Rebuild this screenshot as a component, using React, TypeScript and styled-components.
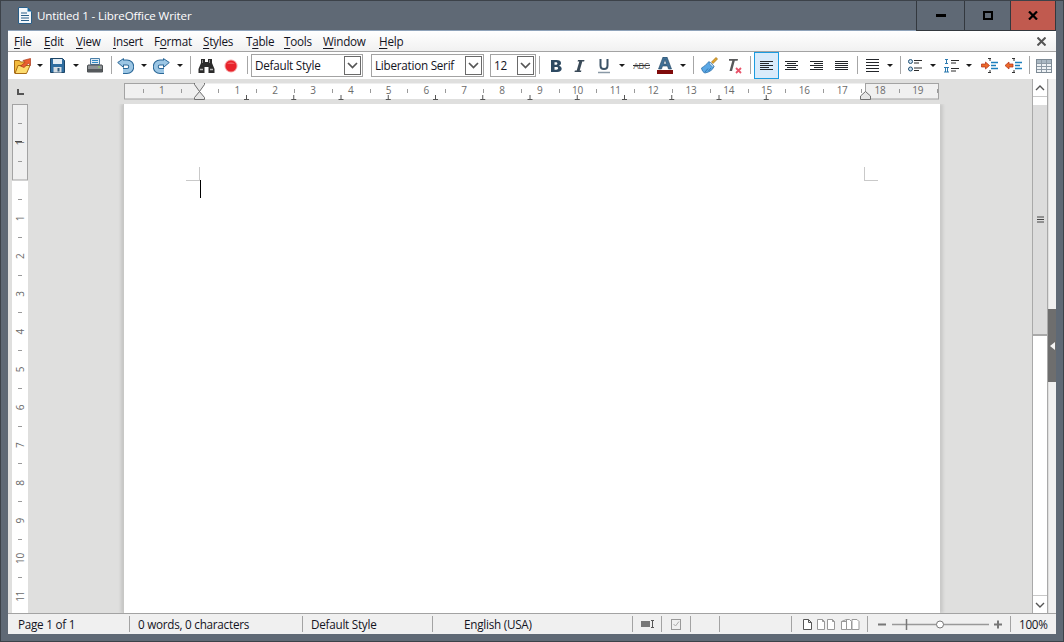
import React from "react";
import styled, { createGlobalStyle } from "styled-components";

const UI_FONT = `"Open Sans", "Noto Sans", "Liberation Sans", sans-serif`;

const GlobalStyle = createGlobalStyle`
    html, body { margin: 0; padding: 0; background: #5f6975; }
    * { box-sizing: border-box; }
`;

const Frame = styled.div`
    width: 1064px;
    height: 642px;
    display: flex;
    flex-direction: column;
    background: #5f6975;
    border: 1px solid #3c4249;
    overflow: hidden;
    font-family: ${UI_FONT};
    font-size: 12px;
    letter-spacing: -0.25px;
    color: #14141e;
`;

const TitleBar = styled.div`
    height: 29px;
    flex: none;
    display: flex;
    align-items: center;
    padding-left: 17px;
    color: #fff;
`;

const TitleText = styled.div`
    margin-left: 5px;
    font-size: 11.6px;
    letter-spacing: -0.13px;
    flex: 1;
`;

const WindowButtons = styled.div`
    position: relative;
    z-index: 1;
    display: flex;
    height: 29px;
    margin-right: 7px;
    align-self: flex-start;
`;

const WindowButton = styled.div<{ $w: number; $close?: boolean }>`
    width: ${(p) => p.$w}px;
    height: 30px;
    display: flex;
    align-items: center;
    justify-content: center;
    border-left: 1px solid #33383e;
    border-bottom: 1px solid #33383e;
    background: ${(p) => (p.$close ? "#c15a4f" : "#5f6975")};
    ${(p) => p.$close && "border-right: 1px solid #33383e;"}
`;

const Client = styled.div`
    flex: 1;
    min-height: 0;
    margin: 0 7px;
    display: flex;
    flex-direction: column;
    border-top: 1px solid #8fa3ba;
`;

const MenuBar = styled.div`
    height: 21px;
    flex: none;
    display: flex;
    align-items: center;
    padding-left: 6px;
    background: linear-gradient(#ffffff, #f1f1f1);
    border-bottom: 1px solid #a3a3a3;
`;

const MenuItem = styled.div<{ $w: number }>`
    width: ${(p) => p.$w}px;
    flex: none;
    white-space: nowrap;
    font-size: 11.7px;
    u { text-underline-offset: 2px; }
`;

const MenuSpacer = styled.div`
    flex: 1;
`;

const DocClose = styled.div`
    width: 24px;
    display: flex;
    justify-content: center;
    margin-right: 3px;
`;

const ToolBar = styled.div`
    height: 27px;
    flex: none;
    display: flex;
    align-items: stretch;
    background: #fff;
    padding-left: 2px;
    overflow: hidden;
`;

const Tool = styled.div<{ $w: number; $active?: boolean }>`
    width: ${(p) => p.$w}px;
    flex: none;
    display: flex;
    align-items: center;
    justify-content: center;
    ${(p) => p.$active && "background: #d9ebfb; border: 1px solid #1c9ce0;"}
    svg { flex: none; }
`;

const Sep = styled.div<{ $l: number; $r?: number }>`
    width: 1px;
    flex: none;
    margin: 4px ${(p) => p.$r ?? 0}px 5px ${(p) => p.$l}px;
    background: #a6a6a6;
`;

const Combo = styled.div<{ $w: number; $l?: number }>`
    width: ${(p) => p.$w}px;
    height: 23px;
    margin: 2px 0 0 ${(p) => p.$l ?? 0}px;
    flex: none;
    display: flex;
    align-items: center;
    justify-content: space-between;
    border: 1px solid #a3a3a3;
    padding: 0 1px 0 3px;
`;

const ComboLabel = styled.span`
    font-size: 11.7px;
    white-space: nowrap;
    padding-bottom: 2px;
`;

const ComboButton = styled.div`
    width: 17px;
    height: 19px;
    border: 1px solid #6a6a6a;
    display: flex;
    align-items: center;
    justify-content: center;
`;

const Workspace = styled.div`
    flex: 1;
    min-height: 0;
    display: flex;
    background: #dfdfde;
`;

const DocColumn = styled.div`
    flex: 1;
    min-width: 0;
    display: flex;
    flex-direction: column;
`;

const RulerRow = styled.div`
    height: 25px;
    flex: none;
    display: flex;
    padding-top: 4px;
`;

const RulerCorner = styled.div`
    width: 116px;
    flex: none;
    padding: 6px 0 0 9px;
    svg { display: block; }
`;

const RulerDrawing = styled.svg`
    display: block;
    font-family: ${UI_FONT};
    font-size: 10px;
`;

const DocRow = styled.div`
    flex: 1;
    min-height: 0;
    display: flex;
    padding-left: 4px;
    overflow: hidden;
`;

const Page = styled.div`
    position: relative;
    width: 816px;
    margin-left: 96px;
    background: #fff;
    box-shadow: -1px 0 0 #c8c8c6, -3px 0 3px rgba(0, 0, 0, 0.12), 3px 0 3px rgba(0, 0, 0, 0.1);
`;

const CropMark = styled.div<{ $left: number; $flip?: boolean }>`
    position: absolute;
    top: 63px;
    left: ${(p) => p.$left}px;
    width: 14px;
    height: 14px;
    border-bottom: 1px solid #c9c9c9;
    ${(p) => (p.$flip ? "border-left: 1px solid #c9c9c9;" : "border-right: 1px solid #c9c9c9;")}
`;

const Caret = styled.div`
    position: absolute;
    left: 76px;
    top: 76px;
    width: 1px;
    height: 18px;
    background: #000;
`;

const ScrollBar = styled.div`
    width: 16px;
    flex: none;
    margin-left: 1px;
    display: flex;
    flex-direction: column;
    background: #fff;
    border-left: 1px solid #a9a9a9;
    border-right: 1px solid #a9a9a9;
`;

const ScrollEnd = styled.div`
    height: 17px;
    flex: none;
    display: flex;
    align-items: center;
    justify-content: center;
    background: #fff;
`;

const ScrollTrack = styled.div`
    flex: 1;
    padding-top: 8px;
    border-top: 1px solid #c8c8c8;
    border-bottom: 1px solid #c8c8c8;
`;

const ScrollThumb = styled.div`
    height: 231px;
    background: #dcdcdc;
    border-bottom: 2px solid #a9a9a9;
    display: flex;
    align-items: center;
    justify-content: center;
`;

const SideStrip = styled.div`
    width: 8px;
    flex: none;
    padding-top: 230px;
    background: linear-gradient(90deg, #dfdfde 1px, #f0f0f0 1px);
`;

const SideHandle = styled.div`
    height: 73px;
    background: #6e6e6e;
    display: flex;
    align-items: center;
    justify-content: center;
`;

const StatusBar = styled.div`
    height: 21px;
    flex: none;
    display: flex;
    align-items: center;
    background: #f0f0f0;
    border-top: 1px solid #a3a3a3;
    font-size: 11.7px;
`;

const StatusCell = styled.div<{ $w: number; $pad?: number; $center?: boolean }>`
    width: ${(p) => p.$w}px;
    height: 16px;
    flex: none;
    display: flex;
    align-items: center;
    ${(p) => p.$center && "justify-content: center;"}
    padding-left: ${(p) => p.$pad ?? 0}px;
    border-right: 1px solid #a3a3a3;
    white-space: nowrap;
`;

const ZoomValue = styled.div`
    padding-left: 8px;
    white-space: nowrap;
`;

const BottomEdge = styled.div`
    height: 7px;
    flex: none;
`;

const MENU = [
    { before: "", hot: "F", after: "ile", w: 30 },
    { before: "", hot: "E", after: "dit", w: 32 },
    { before: "", hot: "V", after: "iew", w: 37 },
    { before: "", hot: "I", after: "nsert", w: 41 },
    { before: "F", hot: "o", after: "rmat", w: 49 },
    { before: "", hot: "S", after: "tyles", w: 43 },
    { before: "T", hot: "a", after: "ble", w: 38 },
    { before: "", hot: "T", after: "ools", w: 39 },
    { before: "", hot: "W", after: "indow", w: 56 },
    { before: "", hot: "H", after: "elp", w: 40 },
];

const Arrow = () => (
    <svg width="6" height="3" viewBox="0 0 6 3"><path d="M0 0h6L3 3z" fill="#1b1b1b" /></svg>
);

const Chevron = () => (
    <svg width="11" height="7" viewBox="0 0 11 7"><path d="M1 1l4.500 4.500L10 1" fill="none" stroke="#555" strokeWidth="1.700" /></svg>
);

const DocIcon = () => (
    <svg width="14" height="17" viewBox="0 0 14 17">
        <path d="M.5.5h9l4 4v12H.5z" fill="#f4f7fa" stroke="#2a5f88" />
        <path d="M9.500.5l4 4h-4z" fill="#1c6ea4" />
        <path d="M3 6h6M3 8.500h8M3 11h8M3 13.500h8" stroke="#2a5f88" />
    </svg>
);

const OpenIcon = () => (
    <svg width="17" height="16" viewBox="0 0 17 16">
        <path d="M.5 2.500h5l1 1.500h5v11H.5z" fill="#f3bb3e" stroke="#a86c16" />
        <path d="M1 15.500L4 7.500h12l-3.500 8z" fill="#fddc6e" stroke="#a86c16" />
        <path d="M6.500 8l4.500-3.500-2-2L16.500.5v7l-2.200-2L10 9.500z" fill="#ea5f30" stroke="#a8381a" strokeWidth=".7" />
    </svg>
);

const SaveIcon = () => (
    <svg width="15" height="15" viewBox="0 0 15 15">
        <path d="M.5.5h12l2 2v12H.5z" fill="#2f6da0" stroke="#1d4566" />
        <rect x="3" y="1" width="9" height="5" fill="#e4edf4" />
        <rect x="3.500" y="9" width="8" height="5.500" fill="#d5dde3" />
        <rect x="7.500" y="10" width="2" height="3.500" fill="#2f5a7d" />
    </svg>
);

const PrintIcon = () => (
    <svg width="16" height="15" viewBox="0 0 16 15">
        <path d="M3.500.5h9v6h-9z" fill="#dfeaf3" stroke="#4a7fa8" />
        <path d="M5 2.500h6M5 4.500h6" stroke="#2f8ac6" />
        <path d="M1 7h14l.5 1v6H.5V8z" fill="#8f9396" stroke="#4b4f52" />
        <rect x="1" y="11" width="14" height="3" fill="#55595c" />
        <rect x="11" y="8.500" width="2" height="1" fill="#8fdc5a" />
    </svg>
);

const TURN = "M5 4.500H10a4.200 4.200 0 0 1 0 8.500H6";

const UndoIcon = ({ flip }: { flip?: boolean }) => (
    <svg width="17" height="16" viewBox="0 0 17 16" style={flip ? { transform: "scaleX(-1)" } : undefined}>
        <path d={TURN} fill="none" stroke="#2a6797" strokeWidth="6" />
        <path d="M.7 4.500L6.500.6v8.800z" fill="#9cc6e4" stroke="#2a6797" />
        <path d={TURN} fill="none" stroke="#9cc6e4" strokeWidth="4" />
    </svg>
);

const BinocularIcon = () => (
    <svg width="17" height="16" viewBox="0 0 17 16">
        <path d="M3 1h4v3h3V1h4v4l2.500 6v4H10.500V9h-4v6H.5v-4L3 5z" fill="#2c2c2c" />
        <path d="M2 11.500h3M12 11.500h3" stroke="#b7b7b7" strokeWidth="1.500" />
        <path d="M4.500 2v3M11.500 2v3" stroke="#8a8a8a" />
    </svg>
);

const RecordIcon = () => (
    <svg width="14" height="14" viewBox="0 0 14 14">
        <circle cx="7" cy="7" r="6.500" fill="#f4a0a0" />
        <circle cx="7" cy="7" r="5.500" fill="#e8232b" />
        <path d="M3 5a4.500 3 0 0 1 8 0z" fill="#f25a5e" />
    </svg>
);

const LetterIcon = ({ kind }: { kind: "B" | "I" }) =>
    kind === "B" ? (
        <svg width="12" height="14" viewBox="0 0 12 14">
            <path
                d="M1 1h5.500C9.500 1 11 2.200 11 4c0 1.300-.8 2.300-2 2.700 1.500.3 2.700 1.500 2.700 3.100 0 2-1.700 3.200-4.500 3.200H1z M4.500 3.300v2.500h1.300c1 0 1.600-.5 1.600-1.300s-.6-1.200-1.600-1.200z M4.500 8v2.700h1.800c1.200 0 1.800-.5 1.800-1.400S7.500 8 6.300 8z"
                fill="#2e4a62"
                fillRule="evenodd"
            />
        </svg>
    ) : (
        <svg width="11" height="14" viewBox="0 0 11 14">
            <path d="M4 1h6.500l-.4 1.500H8.300L5.700 11.500h1.700L7 13H.5l.4-1.500h1.800L5.300 2.500H3.600z" fill="#3a4a58" />
        </svg>
    );

const UnderlineIcon = () => (
    <svg width="12" height="16" viewBox="0 0 12 16">
        <path d="M2.500 1v6.500c0 2.200 1.400 3.500 3.500 3.500s3.500-1.300 3.500-3.500V1" fill="none" stroke="#3c5366" strokeWidth="2" />
        <path d="M0 14.500h12" stroke="#8a99a6" strokeWidth="1.500" />
    </svg>
);

const StrikeIcon = () => (
    <svg width="17" height="9" viewBox="0 0 17 9">
        <text x="8.500" y="8" textAnchor="middle" fontSize="8.500" fontFamily="Liberation Sans, sans-serif" fill="#555">ABC</text>
        <path d="M0 4.500h17" stroke="#333" />
    </svg>
);

const FontColorIcon = () => (
    <svg width="16" height="17" viewBox="0 0 16 17">
        <path d="M6 0h4l4.500 12h-3l-1-3h-5l-1 3h-3z M6.500 7h3L8 2.500z" fill="#3f6f96" stroke="#24445f" strokeWidth=".6" fillRule="evenodd" />
        <rect y="13" width="16" height="4" fill="#7f0a0a" />
    </svg>
);

const BrushIcon = () => (
    <svg width="17" height="17" viewBox="0 0 17 17">
        <path d="M10.500 5L15 .5 16.500 2 12 6.500z" fill="#e5a52a" stroke="#9a6a12" strokeWidth=".7" />
        <path d="M8 4.500l5 5c-1 3-4 5.500-9 6.500-1.500-.5-3-2-3.500-5C3 9.500 6 7 8 4.500z" fill="#5aa8e6" stroke="#2c6ea8" strokeWidth=".8" />
        <path d="M9.500 5.500L13 9l-1 1.500L8 6.500z" fill="#c9dff0" stroke="#2c6ea8" strokeWidth=".6" />
        <path d="M4 15l3-3.500M7.500 14l2.500-3" stroke="#2c6ea8" strokeWidth=".8" />
    </svg>
);

const ClearIcon = () => (
    <svg width="16" height="16" viewBox="0 0 16 16">
        <path d="M3 1h9l-.4 1.800H8.800L6 13H3.500L6.300 2.800H3z" fill="#58595b" />
        <path d="M10 10l5 5M15 10l-5 5" stroke="#e8536a" strokeWidth="1.800" />
    </svg>
);

const ALIGN_ROWS = {
    left: [[0, 13], [0, 9], [0, 13], [0, 9], [0, 13]],
    center: [[0, 13], [2, 9], [0, 13], [2, 9], [0, 13]],
    right: [[0, 13], [4, 9], [0, 13], [4, 9], [0, 13]],
    justify: [[0, 13], [0, 13], [0, 13], [0, 13], [0, 13]],
};

const AlignIcon = ({ kind }: { kind: keyof typeof ALIGN_ROWS }) => (
    <svg width="13" height="9" viewBox="0 0 13 9">
        {ALIGN_ROWS[kind].map(([x, w], i) => (
            <rect key={i} x={x} y={i * 2} width={w} height="1" fill="#23262a" />
        ))}
    </svg>
);

const SpacingIcon = () => (
    <svg width="13" height="15" viewBox="0 0 13 15">
        {[0, 3, 6, 9, 12].map((y) => (
            <rect key={y} y={y + 1} width="13" height="1" fill="#23262a" />
        ))}
    </svg>
);

const BulletIcon = () => (
    <svg width="15" height="13" viewBox="0 0 15 13">
        <circle cx="2.500" cy="2.500" r="2" fill="#cfe2f0" stroke="#1f4f74" />
        <circle cx="2.500" cy="10" r="2" fill="#cfe2f0" stroke="#1f4f74" />
        <path d="M6 1.500h8M6 4h5M6 9h8M6 11.500h5" stroke="#2a2a2a" />
    </svg>
);

const NumberIcon = () => (
    <svg width="15" height="14" viewBox="0 0 15 14">
        <path d="M1 .5h3M2.500.5v4M1 4.500h3M0 8.500h5M1.500 8.500v4.500M3.500 8.500v4.500M0 13h5" stroke="#2d7bb0" fill="none" />
        <path d="M7 1.500h8M7 4h5M7 9.500h8M7 12h5" stroke="#2a2a2a" />
    </svg>
);

const IndentIcon = ({ back }: { back?: boolean }) => (
    <svg width="17" height="15" viewBox="0 0 17 15">
        <path d="M7 .5h3M7 14.500h3M9 1v2M9 12v2" stroke="#333" />
        <path d="M10 4.500h7M10 7.500h5M10 10.500h7" stroke="#1c7fbd" strokeWidth="1.600" />
        <path
            d={back ? "M0 7.500L4 4v2h4v3H4v2z" : "M8.500 7.500L4.500 4v2h-4v3h4v2z"}
            fill="#ec6a2a"
            stroke="#b22c14"
            strokeWidth=".7"
        />
    </svg>
);

const TableIcon = () => (
    <svg width="16" height="14" viewBox="0 0 16 14">
        <rect x=".5" y=".5" width="15" height="13" fill="#eef2f5" stroke="#7d8a95" />
        <rect x="1" y="1" width="14" height="3" fill="#a9b7c2" />
        <path d="M1 4.500h14M1 7.500h14M1 10.500h14M5.500 1v12M10.500 1v12" stroke="#8d9aa5" />
    </svg>
);

const PAGE_LEFT = 75.5; // ruler zero relative to the drawing
const CM = 37.8;

const HorizontalRuler = () => {
    const labels = [1, 1, 2, 3, 4, 5, 6, 7, 8, 9, 10, 11, 12, 13, 14, 15, 16, 17, 18, 19];
    const ticks = Array.from({ length: 22 }, (_, i) => PAGE_LEFT + (i - 2) * CM + CM / 2);
    const tabs = Array.from({ length: 12 }, (_, i) => 122.5 + i * 47.25);
    return (
        <RulerDrawing width="815" height="21" viewBox="0 0 815 21">
            <rect x=".5" y=".5" width="814" height="15.500" fill="#fff" />
            <rect x=".5" y=".5" width="75" height="15.500" fill="#f0f0f0" stroke="#a3a3a3" />
            <rect x="741.500" y=".5" width="73" height="15.500" fill="#f0f0f0" stroke="#a3a3a3" />
            {ticks.map((x) => (
                <rect key={x} x={Math.round(x)} y="6" width="1" height="4" fill="#9a9a9a" />
            ))}
            {tabs.map((x) => (
                <path key={x} d={`M${x} 12v4M${x - 2.5} 16.500h5`} stroke="#555" fill="none" />
            ))}
            {labels.map((n, i) => (
                <text key={i} x={PAGE_LEFT + (i === 0 ? -CM : i * CM)} y="11" textAnchor="middle" fill="#6b6b6b">
                    {n}
                </text>
            ))}
            <path d="M70.500 -.5h10v2l-5 7-5-7zM70.500 16.500h10v-2l-5-6-5 6z" fill="#e6e6e6" stroke="#6f6f6f" />
            <path d="M736.500 16.500v-3.500l5-4.500 5 4.500v3.500z" fill="#e6e6e6" stroke="#6f6f6f" />
        </RulerDrawing>
    );
};

const VerticalRuler = () => {
    const top = 76;
    const labels = [1, 1, 2, 3, 4, 5, 6, 7, 8, 9, 10, 11];
    const ticks = Array.from({ length: 14 }, (_, i) => top + (i - 2) * CM + CM / 2);
    return (
        <RulerDrawing width="16" height="510" viewBox="0 0 16 510">
            <rect width="16" height="510" fill="#fff" />
            <rect x=".5" y=".5" width="15" height="75.500" fill="#f0f0f0" stroke="#a3a3a3" />
            {ticks.map((y) => (
                <rect key={y} x="6" y={Math.round(y)} width="4" height="1" fill="#9a9a9a" />
            ))}
            {labels.map((n, i) => {
                const y = top + 0.6 + (i === 0 ? -CM : i * CM);
                return (
                    <text key={i} x="8" y={y} textAnchor="middle" dominantBaseline="central" transform={`rotate(-90 8 ${y})`} fill="#6b6b6b">
                        {n}
                    </text>
                );
            })}
            <path d="M3 37.500h7" stroke="#4a4a4a" />
        </RulerDrawing>
    );
};

const App = () => (
    <>
        <GlobalStyle />
        <Frame>
            <TitleBar>
                <DocIcon />
                <TitleText>Untitled 1 - LibreOffice Writer</TitleText>
                <WindowButtons>
                    <WindowButton $w={48}>
                        <svg width="10" height="3" viewBox="0 0 10 3"><rect width="10" height="3" fill="#000" /></svg>
                    </WindowButton>
                    <WindowButton $w={46}>
                        <svg width="10" height="9" viewBox="0 0 10 9"><rect x="1" y="1" width="8" height="7" fill="none" stroke="#000" strokeWidth="2" /></svg>
                    </WindowButton>
                    <WindowButton $w={46} $close>
                        <svg width="10" height="9" viewBox="0 0 10 9"><path d="M1 .5l8 8M9 .5l-8 8" stroke="#000" strokeWidth="2.200" /></svg>
                    </WindowButton>
                </WindowButtons>
            </TitleBar>
            <Client>
                <MenuBar>
                    {MENU.map((m) => (
                        <MenuItem key={m.hot + m.after} $w={m.w}>
                            {m.before}<u>{m.hot}</u>{m.after}
                        </MenuItem>
                    ))}
                    <MenuSpacer />
                    <DocClose>
                        <svg width="9" height="9" viewBox="0 0 9 9"><path d="M.5.5l8 8M8.500.5l-8 8" stroke="#555" strokeWidth="2" /></svg>
                    </DocClose>
                </MenuBar>
                <ToolBar>
                    <Tool $w={24}><OpenIcon /></Tool>
                    <Tool $w={12}><Arrow /></Tool>
                    <Tool $w={22}><SaveIcon /></Tool>
                    <Tool $w={16}><Arrow /></Tool>
                    <Tool $w={22}><PrintIcon /></Tool>
                    <Sep $l={5} />
                    <Tool $w={26}><UndoIcon /></Tool>
                    <Tool $w={12}><Arrow /></Tool>
                    <Tool $w={22}><UndoIcon flip /></Tool>
                    <Tool $w={16}><Arrow /></Tool>
                    <Sep $l={2} />
                    <Tool $w={30}><BinocularIcon /></Tool>
                    <Tool $w={20}><RecordIcon /></Tool>
                    <Sep $l={6} $r={3} />
                    <Combo $w={112}>
                        <ComboLabel>Default Style</ComboLabel>
                        <ComboButton><Chevron /></ComboButton>
                    </Combo>
                    <Combo $w={113} $l={8}>
                        <ComboLabel>Liberation Serif</ComboLabel>
                        <ComboButton><Chevron /></ComboButton>
                    </Combo>
                    <Combo $w={46} $l={6}>
                        <ComboLabel>12</ComboLabel>
                        <ComboButton><Chevron /></ComboButton>
                    </Combo>
                    <Sep $l={3} $r={6} />
                    <Tool $w={20}><LetterIcon kind="B" /></Tool>
                    <Tool $w={26}><LetterIcon kind="I" /></Tool>
                    <Tool $w={24}><UnderlineIcon /></Tool>
                    <Tool $w={12}><Arrow /></Tool>
                    <Tool $w={26}><StrikeIcon /></Tool>
                    <Tool $w={22}><FontColorIcon /></Tool>
                    <Tool $w={14}><Arrow /></Tool>
                    <Sep $l={3} />
                    <Tool $w={30}><BrushIcon /></Tool>
                    <Tool $w={20}><ClearIcon /></Tool>
                    <Sep $l={6} $r={3} />
                    <Tool $w={25} $active><AlignIcon kind="left" /></Tool>
                    <Tool $w={24}><AlignIcon kind="center" /></Tool>
                    <Tool $w={26}><AlignIcon kind="right" /></Tool>
                    <Tool $w={24}><AlignIcon kind="justify" /></Tool>
                    <Sep $l={4} />
                    <Tool $w={28}><SpacingIcon /></Tool>
                    <Tool $w={8}><Arrow /></Tool>
                    <Sep $l={6} />
                    <Tool $w={28}><BulletIcon /></Tool>
                    <Tool $w={8}><Arrow /></Tool>
                    <Tool $w={28}><NumberIcon /></Tool>
                    <Tool $w={8}><Arrow /></Tool>
                    <Tool $w={32}><IndentIcon /></Tool>
                    <Tool $w={16}><IndentIcon back /></Tool>
                    <Sep $l={8} $r={1} />
                    <Tool $w={26}><TableIcon /></Tool>
                </ToolBar>
                <Workspace>
                    <DocColumn>
                        <RulerRow>
                            <RulerCorner>
                                <svg width="7" height="6" viewBox="0 0 7 6"><path d="M1 0v5h6" fill="none" stroke="#555" strokeWidth="2" /></svg>
                            </RulerCorner>
                            <HorizontalRuler />
                        </RulerRow>
                        <DocRow>
                            <VerticalRuler />
                            <Page>
                                <CropMark $left={62} />
                                <CropMark $left={740} $flip />
                                <Caret />
                            </Page>
                        </DocRow>
                    </DocColumn>
                    <ScrollBar>
                        <ScrollEnd>
                            <svg width="10" height="6" viewBox="0 0 10 6"><path d="M1 5l4-4 4 4" fill="none" stroke="#555" strokeWidth="1.400" /></svg>
                        </ScrollEnd>
                        <ScrollTrack>
                            <ScrollThumb>
                                <svg width="7" height="7" viewBox="0 0 7 7"><path d="M0 1h7M0 3.500h7M0 6h7" stroke="#444" /></svg>
                            </ScrollThumb>
                        </ScrollTrack>
                        <ScrollEnd>
                            <svg width="10" height="6" viewBox="0 0 10 6"><path d="M1 1l4 4 4-4" fill="none" stroke="#555" strokeWidth="1.400" /></svg>
                        </ScrollEnd>
                    </ScrollBar>
                    <SideStrip>
                        <SideHandle>
                            <svg width="5" height="8" viewBox="0 0 5 8"><path d="M5 0v8L0 4z" fill="#f4f4f4" /></svg>
                        </SideHandle>
                    </SideStrip>
                </Workspace>
                <StatusBar>
                    <StatusCell $w={122} $pad={10}>Page 1 of 1</StatusCell>
                    <StatusCell $w={173} $pad={8}>0 words, 0 characters</StatusCell>
                    <StatusCell $w={130} $pad={8}>Default Style</StatusCell>
                    <StatusCell $w={200} $pad={31}>English (USA)</StatusCell>
                    <StatusCell $w={29} $center>
                        <svg width="13" height="8" viewBox="0 0 13 8"><rect y="1" width="9" height="6" fill="#777" /><path d="M10 .5h3M11.500.5v7M10 7.500h3" stroke="#555" fill="none" /></svg>
                    </StatusCell>
                    <StatusCell $w={29} $center>
                        <svg width="10" height="11" viewBox="0 0 10 11"><rect x=".5" y=".5" width="9" height="10" fill="none" stroke="#999" /><path d="M2.500 5l2 2 3.500-4.500" fill="none" stroke="#aaa" /></svg>
                    </StatusCell>
                    <StatusCell $w={29} />
                    <StatusCell $w={72} />
                    <StatusCell $w={76} $pad={11}>
                        <svg width="57" height="11" viewBox="0 0 57 11">
                            <path d="M.5.5h5l3 3v7h-8zM5.500.5v3h3" fill="#fff" stroke="#555" />
                            <path d="M14.500.5h5l2 2v8h-7zM19.500.5v2h2M24.500.5h5l2 2v8h-7zM29.500.5v2h2" fill="#fff" stroke="#999" />
                            <path d="M38.500 2.500l5-2v10l-5 0zM43.500 10.500v-10h3l2 2v8zM38.500 2.500h5" fill="#fff" stroke="#999" />
                            <path d="M49 .5h5l2 2v8h-7z" fill="#fff" stroke="#999" />
                        </svg>
                    </StatusCell>
                    <StatusCell $w={143} $pad={10}>
                        <svg width="124" height="13" viewBox="0 0 124 13">
                            <path d="M0 6.500h8" stroke="#777" strokeWidth="2" />
                            <path d="M14 6.500h97" stroke="#999" strokeWidth="1.500" />
                            <path d="M28.500 1v11" stroke="#777" strokeWidth="1.500" />
                            <circle cx="62" cy="6.500" r="3.500" fill="#fff" stroke="#777" />
                            <path d="M116 6.500h8M120 2.500v8" stroke="#777" strokeWidth="2" />
                        </svg>
                    </StatusCell>
                    <ZoomValue>100%</ZoomValue>
                </StatusBar>
            </Client>
            <BottomEdge />
        </Frame>
    </>
);

export default App;
